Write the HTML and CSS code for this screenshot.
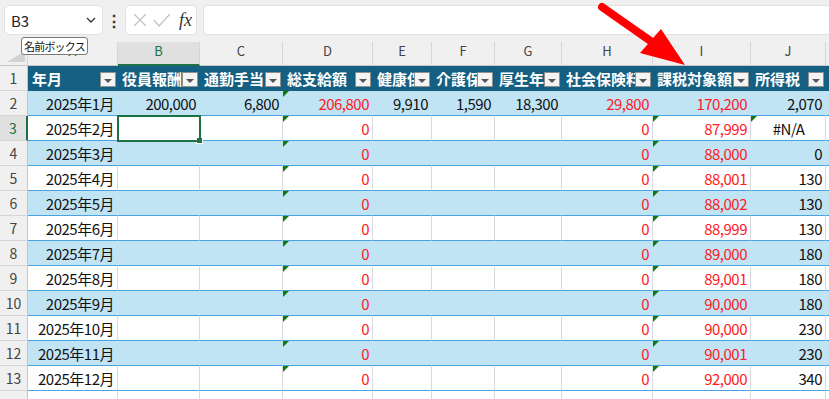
FILE: index.html
```html
<!DOCTYPE html>
<html lang="ja">
<head>
    <meta charset="UTF-8" />
    <title>Book1 - Excel</title>
    <link rel="stylesheet" href="styles.css">
</head>
<body>
    <div class="toolbar">
        <div class="namebox">
            <span>B3</span>
            <svg class="chev" width="10" height="6" viewBox="0 0 10 6"><path d="M1 1l4 4 4-4" fill="none" stroke="#333" stroke-width="1.3"/></svg>
        </div>
        <div class="dots">&#8942;</div>
        <div class="fxbox">
            <svg width="16" height="16" viewBox="0 0 16 16"><path d="M2 2l12 12M14 2L2 14" stroke="#c2c2c2" stroke-width="1.2"/></svg>
            <svg width="18" height="16" viewBox="0 0 18 16"><path d="M1 8l5 6L17 2" fill="none" stroke="#c2c2c2" stroke-width="1.2"/></svg>
            <span class="fx">fx</span>
        </div>
        <div class="formula"></div>
    </div>
    <div class="tip">名前ボックス</div>

    <div class="sheet">
        <div class="row colhdr">
            <div class="corner"></div>
            <div>A</div><div class="sel">B</div><div>C</div><div>D</div><div>E</div><div>F</div>
            <div>G</div><div>H</div><div>I</div><div>J</div><div>K</div>
        </div>
        <div class="row thead">
            <div class="rh">1</div>
            <div class="c"><span>年月</span><i class="dd"></i></div>
            <div class="c"><span>役員報酬</span><i class="dd"></i></div>
            <div class="c"><span>通勤手当</span><i class="dd"></i></div>
            <div class="c"><span>総支給額</span><i class="dd"></i></div>
            <div class="c"><span>健康保険</span><i class="dd"></i></div>
            <div class="c"><span>介護保険</span><i class="dd"></i></div>
            <div class="c"><span>厚生年金</span><i class="dd"></i></div>
            <div class="c"><span>社会保険料</span><i class="dd"></i></div>
            <div class="c"><span>課税対象額</span><i class="dd"></i></div>
            <div class="c"><span>所得税</span><i class="dd"></i></div>
            <div class="c"></div>
        </div>
        <div class="row band">
            <div class="rh">2</div>
            <div class="c r">2025年1月</div><div class="c r">200,000</div><div class="c r">6,800</div>
            <div class="c r red tri">206,800</div><div class="c r">9,910</div><div class="c r">1,590</div>
            <div class="c r">18,300</div><div class="c r red">29,800</div><div class="c r red">170,200</div>
            <div class="c r">2,070</div><div class="c"></div>
        </div>
        <div class="row">
            <div class="rh cur">3</div>
            <div class="c r">2025年2月</div><div class="c active"></div><div class="c"></div>
            <div class="c r red tri">0</div><div class="c"></div><div class="c"></div>
            <div class="c"></div><div class="c r red">0</div><div class="c r red tri">87,999</div>
            <div class="c ctr tri">#N/A</div><div class="c"></div>
        </div>
        <div class="row band">
            <div class="rh">4</div>
            <div class="c r">2025年3月</div><div class="c"></div><div class="c"></div>
            <div class="c r red tri">0</div><div class="c"></div><div class="c"></div>
            <div class="c"></div><div class="c r red">0</div><div class="c r red tri">88,000</div>
            <div class="c r">0</div><div class="c"></div>
        </div>
        <div class="row">
            <div class="rh">5</div>
            <div class="c r">2025年4月</div><div class="c"></div><div class="c"></div>
            <div class="c r red tri">0</div><div class="c"></div><div class="c"></div>
            <div class="c"></div><div class="c r red">0</div><div class="c r red tri">88,001</div>
            <div class="c r">130</div><div class="c"></div>
        </div>
        <div class="row band">
            <div class="rh">6</div>
            <div class="c r">2025年5月</div><div class="c"></div><div class="c"></div>
            <div class="c r red tri">0</div><div class="c"></div><div class="c"></div>
            <div class="c"></div><div class="c r red">0</div><div class="c r red tri">88,002</div>
            <div class="c r">130</div><div class="c"></div>
        </div>
        <div class="row">
            <div class="rh">7</div>
            <div class="c r">2025年6月</div><div class="c"></div><div class="c"></div>
            <div class="c r red tri">0</div><div class="c"></div><div class="c"></div>
            <div class="c"></div><div class="c r red">0</div><div class="c r red tri">88,999</div>
            <div class="c r">130</div><div class="c"></div>
        </div>
        <div class="row band">
            <div class="rh">8</div>
            <div class="c r">2025年7月</div><div class="c"></div><div class="c"></div>
            <div class="c r red tri">0</div><div class="c"></div><div class="c"></div>
            <div class="c"></div><div class="c r red">0</div><div class="c r red tri">89,000</div>
            <div class="c r">180</div><div class="c"></div>
        </div>
        <div class="row">
            <div class="rh">9</div>
            <div class="c r">2025年8月</div><div class="c"></div><div class="c"></div>
            <div class="c r red tri">0</div><div class="c"></div><div class="c"></div>
            <div class="c"></div><div class="c r red">0</div><div class="c r red tri">89,001</div>
            <div class="c r">180</div><div class="c"></div>
        </div>
        <div class="row band">
            <div class="rh">10</div>
            <div class="c r">2025年9月</div><div class="c"></div><div class="c"></div>
            <div class="c r red tri">0</div><div class="c"></div><div class="c"></div>
            <div class="c"></div><div class="c r red">0</div><div class="c r red tri">90,000</div>
            <div class="c r">180</div><div class="c"></div>
        </div>
        <div class="row">
            <div class="rh">11</div>
            <div class="c r">2025年10月</div><div class="c"></div><div class="c"></div>
            <div class="c r red tri">0</div><div class="c"></div><div class="c"></div>
            <div class="c"></div><div class="c r red">0</div><div class="c r red tri">90,000</div>
            <div class="c r">230</div><div class="c"></div>
        </div>
        <div class="row band">
            <div class="rh">12</div>
            <div class="c r">2025年11月</div><div class="c"></div><div class="c"></div>
            <div class="c r red tri">0</div><div class="c"></div><div class="c"></div>
            <div class="c"></div><div class="c r red">0</div><div class="c r red tri">90,001</div>
            <div class="c r">230</div><div class="c"></div>
        </div>
        <div class="row">
            <div class="rh">13</div>
            <div class="c r">2025年12月</div><div class="c"></div><div class="c"></div>
            <div class="c r red tri">0</div><div class="c"></div><div class="c"></div>
            <div class="c"></div><div class="c r red">0</div><div class="c r red tri">92,000</div>
            <div class="c r">340</div><div class="c"></div>
        </div>
        <div class="row empty">
            <div class="rh"></div>
            <div class="c"></div><div class="c"></div><div class="c"></div><div class="c"></div><div class="c"></div>
            <div class="c"></div><div class="c"></div><div class="c"></div><div class="c"></div><div class="c"></div><div class="c"></div>
        </div>
    </div>

    <!-- callout arrow -->
    <svg class="arrow" width="829" height="100" viewBox="0 0 829 100">
        <line x1="602" y1="7" x2="652" y2="42" stroke="#ff0000" stroke-width="8" stroke-linecap="round"/>
        <polygon points="640,53 661,29 685,65" fill="#ff0000"/>
    </svg>
</body>
</html>
```

FILE: styles.css
```css
html, body {
    margin: 0; padding: 0;
    overflow: hidden;
}
body {
    font-family: "Noto Sans CJK JP", sans-serif;
    background: #fff; color: #111;
    width: 829px; height: 399px;
    position: relative;
}

/* formula bar */
.toolbar {
    height: 42px;
    background: #f0f0f0;
    display: flex; align-items: flex-start;
    padding: 5px 0 0 4px;
    box-sizing: border-box;
}
.namebox, .fxbox, .formula {
    height: 30px;
    background: #fff;
    border: 1px solid #e2e2e2;
    border-radius: 5px;
    box-sizing: border-box;
}
.namebox {
    width: 99px;
    display: flex; align-items: center; justify-content: space-between;
    padding: 0 6px 0 6px;
    font-size: 15px; color: #222;
}
.dots {
    width: 22px; text-align: center;
    font-size: 16px; line-height: 30px; color: #333; font-weight: bold;
}
.fxbox {
    width: 72px;
    display: flex; align-items: center; gap: 5px;
    padding-left: 6px;
}
.fx {
    font-family: "Liberation Serif", serif;
    font-style: italic; font-size: 18px; color: #333;
    margin-left: 3px;
}
.formula {
    flex: 1;
    margin-left: 6px; margin-right: -8px;
}
.tip {
    position: absolute; left: 21px; top: 37px;
    height: 18px; line-height: 16px;
    padding: 0 2px;
    background: #fff;
    border: 1px solid #7a7a7a; border-radius: 3px;
    font-size: 11px; letter-spacing: -0.8px; color: #111;
    box-sizing: border-box;
    z-index: 3;
}

/* grid */
.sheet {
    width: 829px;
    overflow: hidden;
}
.row {
    display: grid;
    grid-template-columns: 28px 90px 82px 83px 90px 59px 63px 67px 91px 98px 75px 60px;
    width: 886px;
    height: 25px;
}
.row > div {
    box-sizing: border-box;
    position: relative;
    white-space: nowrap; overflow: hidden;
}

.colhdr {
    height: 24px;
    background: #f0f0f0;
}
.colhdr > div {
    border-right: 1px solid #d6d6d6;
    border-bottom: 1px solid #c8c8c8;
    text-align: center;
    font-size: 13px; line-height: 17px; color: #444;
}
.colhdr .sel {
    background: #e0e0e0;
    color: #1e7145;
    border-bottom: 2px solid #1e7145;
}
.corner::after {
    content: '';
    position: absolute; right: 2px; bottom: 3px;
    border-left: 18px solid transparent;
    border-bottom: 11px solid #d2d2d2;
}

.rh {
    background: #f0f0f0;
    border-right: 1px solid #c4c4c4;
    border-bottom: 1px solid #d6d6d6;
    text-align: center;
    font-size: 14px; line-height: 24px; color: #444;
}
.rh.cur {
    background: #e0e0e0;
    color: #1e7145;
    border-right: 2px solid #1e7145;
}

.c {
    display: flex; align-items: center;
    padding: 0 3px 0 4px;
    font-size: 15px; letter-spacing: -0.5px;
    border-right: 1px solid #dadada;
    border-bottom: 1px solid #4aa3df;
}
.r { justify-content: flex-end; }
.ctr { justify-content: center; }
.red { color: #ff1a24; }

.band .c {
    background: #c1e4f5;
    border-right-color: #c1e4f5;
}
.thead .c {
    background: #156082;
    border-color: #156082;
    color: #fff; font-weight: bold; letter-spacing: 0;
}
.thead .c span {
    overflow: hidden;
}
.empty .c {
    border-bottom-color: #dadada;
}

/* header filter button */
.dd {
    position: absolute; right: 1px; bottom: 3px;
    width: 16px; height: 15px;
    background: #f4f4f4;
    border: 1px solid #8f8f8f;
    box-sizing: border-box;
}
.dd::after {
    content: '';
    position: absolute; left: 3px; top: 6px;
    border-left: 4px solid transparent;
    border-right: 4px solid transparent;
    border-top: 4px solid #555;
}

/* error indicator */
.tri::before {
    content: '';
    position: absolute; left: 0; top: 0;
    border-top: 6px solid #0f7b0f;
    border-right: 6px solid transparent;
}

/* selected cell */
.active { overflow: visible !important; z-index: 2; }
.active::after {
    content: '';
    position: absolute; left: -1px; top: -1px; right: -2px; bottom: -2px;
    border: 2px solid #1e7145;
}
.active::before {
    content: '';
    position: absolute; right: -4px; bottom: -4px;
    width: 5px; height: 5px;
    background: #1e7145;
    border: 1px solid #fff;
}

.arrow {
    position: absolute; left: 0; top: 0;
    pointer-events: none;
    z-index: 5;
}
```
